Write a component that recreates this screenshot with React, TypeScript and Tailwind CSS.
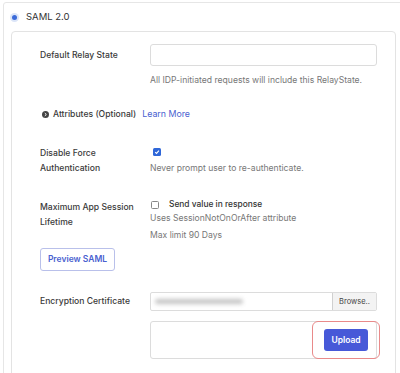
import React from "react";

export default function App() {
  return (
    <div
      className="w-[400px] h-[373px] overflow-hidden bg-white pt-[2px] pl-[3px]"
      style={{ fontFamily: "Inter, 'Noto Sans', sans-serif" }}
    >
      <div className="w-[420px] h-[400px] border border-[#e6e6e6] rounded-[3px]">
        {/* radio row */}
        <div className="flex items-center h-[28px] pl-[6px]">
          <span className="w-[9px] h-[9px] rounded-full bg-[#dbe5f8] flex items-center justify-center">
            <span className="w-[5px] h-[5px] rounded-full bg-[#3b6ad9]" />
          </span>
          <span className="ml-[7px] text-[9.5px] text-[#333]">SAML 2.0</span>
        </div>
        {/* inner box */}
        <div className="ml-[7px] w-[385px] h-[360px] border border-[#e3e3e3] rounded-[4px] pl-[28px] pt-[12px]">
          {/* relay state */}
          <div className="flex items-center">
            <div className="w-[110px] text-[8.6px] font-medium text-[#3a3a3a]">Default Relay State</div>
            <div className="w-[227px] h-[22px] border border-[#dcdcdc] rounded-[3px]" />
          </div>
          <div className="ml-[110px] mt-[7px] text-[8.6px] leading-[14px] text-[#777]">
            All IDP-initiated requests will include this RelayState.
          </div>
          {/* attributes */}
          <div className="flex items-center mt-[19px] h-[16px]">
            <svg width="7" height="7" viewBox="0 0 10 10" className="ml-[2px]">
              <circle cx="5" cy="5" r="5" fill="#444" />
              <path d="M4 3 L6.2 5 L4 7" stroke="#fff" strokeWidth="1.4" fill="none" />
            </svg>
            <span className="ml-[4px] text-[8.6px] font-medium text-[#3a3a3a]">Attributes (Optional)</span>
            <span className="ml-[6px] text-[8.8px] text-[#4a5fd0]">Learn More</span>
          </div>
          {/* disable force */}
          <div className="flex mt-[24px]">
            <div className="w-[110px] text-[8.6px] font-medium leading-[15px] text-[#3a3a3a]">
              Disable Force
              <br />
              Authentication
            </div>
            <div className="flex flex-col">
              <div className="h-[15px] flex items-center">
                <span className="ml-[3px] -mt-[3px] w-[8px] h-[8px] rounded-[1.5px] bg-[#2f67d8] flex items-center justify-center">
                  <svg width="6" height="6" viewBox="0 0 10 10">
                    <path d="M2 5.2 L4.2 7.4 L8.2 2.6" stroke="#fff" strokeWidth="1.8" fill="none" />
                  </svg>
                </span>
              </div>
              <div className="text-[8.6px] leading-[15px] text-[#777]">Never prompt user to re-authenticate.</div>
            </div>
          </div>
          {/* max session */}
          <div className="flex mt-[24px] h-[42px]">
            <div className="w-[110px] text-[8.6px] font-medium leading-[15px] text-[#3a3a3a]">
              Maximum App Session
              <br />
              Lifetime
            </div>
            <div className="flex flex-col -mt-[2px]">
              <div className="flex items-center h-[15px]">
                <span className="ml-[1px] w-[8px] h-[8px] rounded-[1.5px] border border-[#888] bg-white" />
                <span className="ml-[10px] text-[8.4px] text-[#333] font-medium">Send value in response</span>
              </div>
              <div className="text-[8.6px] leading-[14px] text-[#777]">Uses SessionNotOnOrAfter attribute</div>
              <div className="text-[8.6px] leading-[14px] mt-[3px] text-[#777]">Max limit 90 Days</div>
            </div>
          </div>
          {/* preview */}
          <div className="mt-[2px]">
            <button className="w-[75px] h-[23px] border border-[#b9c0ea] rounded-[3px] text-[8.5px] font-semibold text-[#4a5fd0] bg-white">
              Preview SAML
            </button>
          </div>
          {/* encryption */}
          <div className="flex items-center mt-[21px]">
            <div className="w-[110px] text-[8.6px] font-medium text-[#3a3a3a]">Encryption Certificate</div>
            <div className="w-[227px] h-[19px] border border-[#dcdcdc] rounded-[2px] flex items-center">
              <div className="flex-1 h-full flex items-center pl-[4px]">
                <div className="w-[88px] h-[5px] rounded-full bg-[#c4c4c4] blur-[2px]" />
              </div>
              <div className="w-[44px] h-full border-l border-[#d0d0d0] bg-[#f3f3f3] text-[7.5px] text-[#444] flex items-center justify-center">
                Browse..
              </div>
            </div>
          </div>
          {/* textarea */}
          <div className="ml-[110px] mt-[10px] w-[227px] h-[38px] border border-[#dcdcdc] rounded-[3px] flex items-center justify-end pr-[4px]">
            <div className="relative w-[68px] h-[38px] rounded-[6px] border-[1.5px] border-[#e98a8a] flex items-center justify-center -mr-[8px]">
              <button className="w-[44px] h-[22px] rounded-[3px] bg-[#4759d8] text-white text-[8.5px] font-semibold">
                Upload
              </button>
            </div>
          </div>
        </div>
      </div>
    </div>
  );
}
